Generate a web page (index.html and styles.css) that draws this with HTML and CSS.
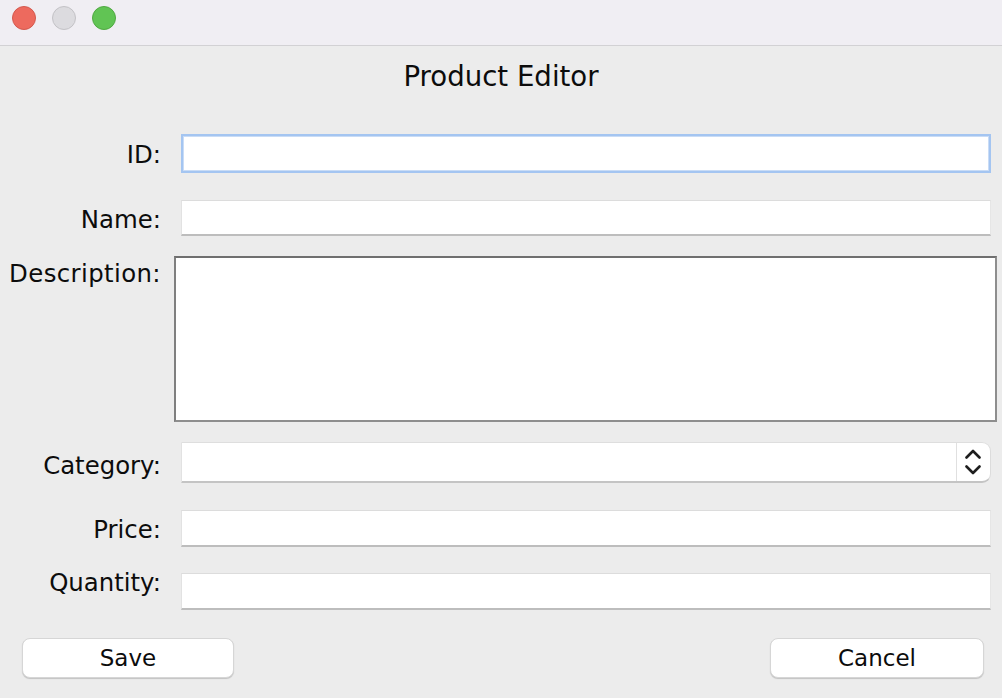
FILE: index.html
```html
<!DOCTYPE html>
<html>
<head>
<meta charset="utf-8">
<title>Product Editor</title>
<link rel="stylesheet" href="styles.css">
</head>
<body>
<div class="window">
  <div class="titlebar">
    <span class="light light-close"></span>
    <span class="light light-min"></span>
    <span class="light light-max"></span>
  </div>
  <div class="content">
    <h1 class="title">Product Editor</h1>
    <div class="form">
      <div class="row row-id">
        <label class="label">ID:</label>
        <div class="field field-focus"></div>
      </div>
      <div class="row row-name">
        <label class="label">Name:</label>
        <div class="field"></div>
      </div>
      <div class="row row-desc">
        <label class="label">Description:</label>
        <div class="textarea"></div>
      </div>
      <div class="row row-cat">
        <label class="label">Category:</label>
        <div class="combo">
          <div class="combo-text"></div>
          <div class="combo-arrow">
            <svg width="16" height="26" viewBox="0 0 16 26">
              <path d="M1.5 8.5 L8 2 L14.5 8.5" fill="none" stroke="#1e1e1e" stroke-width="2.6" stroke-linecap="round" stroke-linejoin="round"/>
              <path d="M1.5 17.5 L8 24 L14.5 17.5" fill="none" stroke="#1e1e1e" stroke-width="2.6" stroke-linecap="round" stroke-linejoin="round"/>
            </svg>
          </div>
        </div>
      </div>
      <div class="row row-price">
        <label class="label">Price:</label>
        <div class="field"></div>
      </div>
      <div class="row row-qty">
        <label class="label">Quantity:</label>
        <div class="field"></div>
      </div>
    </div>
    <div class="buttons">
      <button class="btn btn-save">Save</button>
      <button class="btn btn-cancel">Cancel</button>
    </div>
  </div>
</div>
</body>
</html>
```
FILE: styles.css
```css
html, body {
  margin: 0;
  padding: 0;
}
body {
  width: 1002px;
  height: 698px;
  overflow: hidden;
  background: #ececec;
  font-family: "DejaVu Sans", "Liberation Sans", sans-serif;
  color: #111;
}
.window {
  display: flex;
  flex-direction: column;
  height: 698px;
}
.titlebar {
  background: #f0eef3;
  border-bottom: 1px solid #d2d1d4;
  display: flex;
  align-items: flex-start;
  padding: 6px 0 0 12px;
  gap: 16px;
  box-sizing: border-box;
  height: 46px;
}
.light {
  width: 24px;
  height: 24px;
  border-radius: 50%;
  box-sizing: border-box;
}
.light-close { background: #ed6a5e; border: 1px solid #d3594e; }
.light-min { background: #dcdbdf; border: 1px solid #c3c2c6; }
.light-max { background: #61c454; border: 1px solid #50a942; }

.content {
  flex: 1;
  padding: 0 11px 0 0;
}
.title {
  margin: 0;
  padding-top: 14px;
  font-size: 27.6px;
  font-weight: normal;
  line-height: 34px;
  text-align: center;
  padding-left: 11px;
  color: #0c0c0c;
}
.form {
  margin-top: 40px;
}
.row {
  display: flex;
  align-items: center;
  gap: 20px;
}
.label {
  flex: none;
  width: 161px;
  text-align: right;
  font-size: 24.4px;
  line-height: 30px;
  padding-top: 3px;
  color: #0c0c0c;
  white-space: nowrap;
}
.field {
  flex: 1;
  height: 37px;
  background: #fff;
  box-sizing: border-box;
  border-top: 1px solid #dcdcdc;
  border-left: 1px solid #e2e2e2;
  border-right: 1px solid #e6e6e6;
  border-bottom: 2px solid #bdbdbd;
}
.field-focus {
  height: 39px;
  border: 2px solid #a4c5f1;
  box-shadow: inset 0 0 0 1px #c9dcf6;
}
.row-name { margin-top: 27px; }
.row-name .field { height: 36px; }
.row-desc {
  margin-top: 20px;
  align-items: flex-start;
}
.row-desc .label { margin-top: 0; letter-spacing: 0.4px; }
.textarea {
  flex: 1;
  height: 166px;
  margin-left: -7px;
  margin-right: -6px;
  background: #fff;
  box-sizing: border-box;
  border: 2px solid #8e8e8e;
  border-top-color: #6f6f6f;
  border-left-color: #7f7f7f;
}
.row-cat { margin-top: 20px; }
.row-cat .label { margin-top: 4px; }
.combo {
  flex: 1;
  height: 41px;
  display: flex;
  background: #fff;
  box-sizing: border-box;
  border-top: 1px solid #dedede;
  border-left: 1px solid #e2e2e2;
  border-right: 1px solid #dcdcdc;
  border-bottom: 2px solid #c4c4c4;
  border-radius: 0 9px 9px 0;
}
.combo-text { flex: 1; }
.combo-arrow {
  width: 32px;
  border-left: 1px solid #e0e0e0;
  display: flex;
  align-items: center;
  justify-content: center;
  padding-right: 1px;
}
.row-price { margin-top: 27px; }
.row-qty {
  margin-top: 26px;
  align-items: flex-start;
}
.row-qty .label { margin-top: -8px; }

.buttons {
  display: flex;
  justify-content: space-between;
  margin-top: 28px;
  padding-left: 22px;
  padding-right: 7px;
}
.btn {
  height: 40px;
  background: #fff;
  border: 1px solid #d6d6d6;
  border-radius: 8px;
  box-shadow: 0 1px 1px rgba(0,0,0,0.18);
  font-family: "DejaVu Sans", "Liberation Sans", sans-serif;
  font-size: 23px;
  color: #0c0c0c;
  padding: 0;
  line-height: 38px;
}
.btn-save { width: 212px; }
.btn-cancel { width: 214px; }
```
